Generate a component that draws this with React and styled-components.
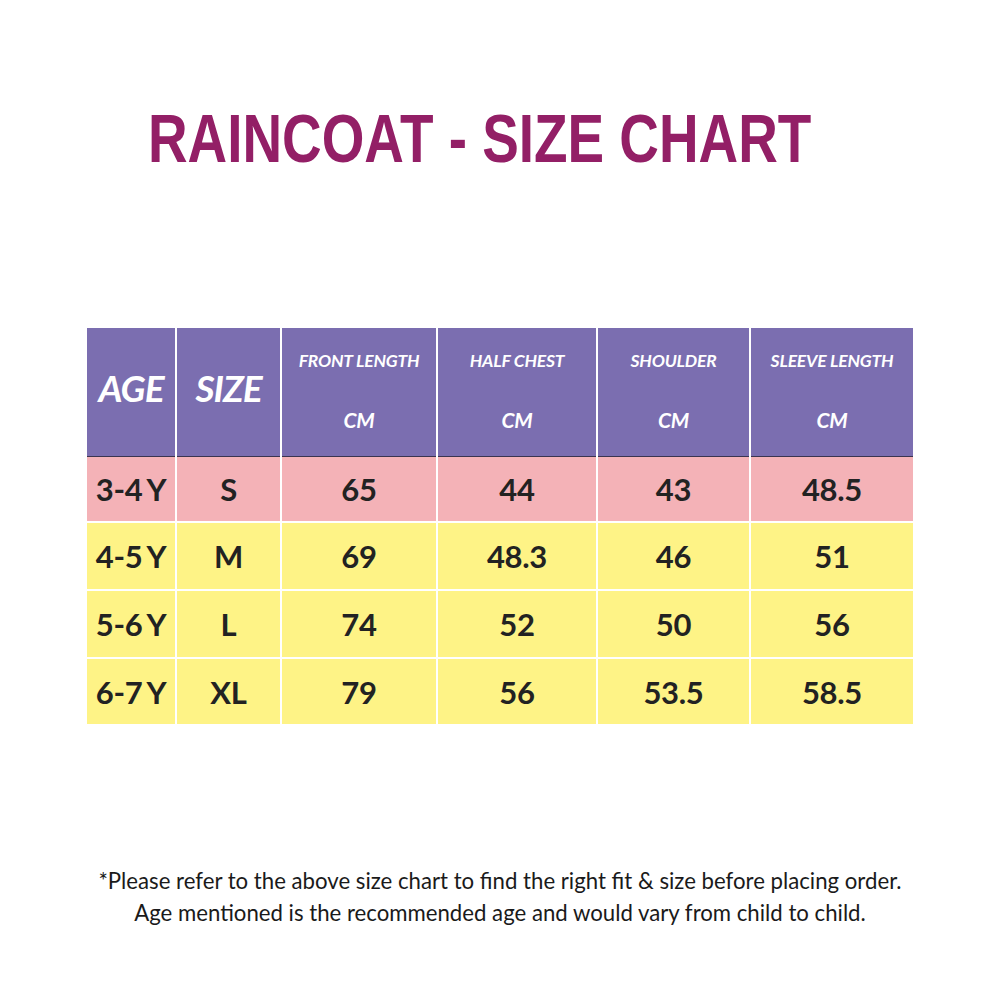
import React from 'react';
import styled, { createGlobalStyle } from 'styled-components';

const Global = createGlobalStyle`
  body {
    margin: 0;
    background: #fff;
  }
`;

const Page = styled.div`
  width: 1000px;
  height: 1000px;
  display: flex;
  flex-direction: column;
  align-items: center;
  background: #fff;
`;

const TitleWrap = styled.div`
  height: 328px;
  width: 100%;
  padding-top: 100px;
  box-sizing: border-box;
  padding-left: 148px;
`;

const Title = styled.h1`
  display: inline-block;
  margin: 0;
  font-family: 'Liberation Sans', Arial, sans-serif;
  font-weight: 700;
  font-size: 69px;
  line-height: 78px;
  color: #931f66;
  white-space: nowrap;
  transform: scaleX(0.795);
  transform-origin: left center;
`;

const Table = styled.div`
  display: grid;
  grid-template-columns: 88px 103px 154px 158px 151px 162px;
  grid-template-rows: 127px 64px 66px 66px 65px;
  column-gap: 2px;
  row-gap: 2px;
  font-family: Lato, 'Open Sans', sans-serif;
`;

const HeadCell = styled.div`
  background: #7b6eb0;
  border-bottom: 1px solid #3a3450;
  color: #fff;
  font-style: italic;
  font-weight: 700;
  display: flex;
  flex-direction: column;
  align-items: center;
  justify-content: ${p => (p.big ? 'center' : 'flex-start')};
  font-size: ${p => (p.big ? '37px' : '17.5px')};
  padding-top: ${p => (p.big ? '0' : '22px')};
  padding-bottom: ${p => (p.big ? '10px' : '0')};
  box-sizing: border-box;
  letter-spacing: ${p => (p.big ? '-1px' : '-0.2px')};
  margin-bottom: -2px;
`;

const Unit = styled.span`
  margin-top: 36px;
  font-size: 21px;
`;

const Cell = styled.div`
  background: ${p => (p.pink ? '#f4b2b7' : '#fef386')};
  color: #222;
  font-weight: 700;
  font-size: 31px;
  letter-spacing: -0.3px;
  word-spacing: -2px;
  display: flex;
  align-items: center;
  justify-content: center;
`;

const Note = styled.div`
  margin-top: 141px;
  font-family: Lato, 'Open Sans', sans-serif;
  font-size: 22.2px;
  line-height: 32px;
  color: #1a1a1a;
  text-align: center;
  white-space: nowrap;
`;

const headers = ['FRONT LENGTH', 'HALF CHEST', 'SHOULDER', 'SLEEVE LENGTH'];

const rows = [
  ['3-4 Y', 'S', '65', '44', '43', '48.5'],
  ['4-5 Y', 'M', '69', '48.3', '46', '51'],
  ['5-6 Y', 'L', '74', '52', '50', '56'],
  ['6-7 Y', 'XL', '79', '56', '53.5', '58.5'],
];

export default function App() {
  return (
    <Page>
      <Global />
      <TitleWrap>
        <Title>RAINCOAT - SIZE CHART</Title>
      </TitleWrap>
      <Table>
        <HeadCell big>AGE</HeadCell>
        <HeadCell big>SIZE</HeadCell>
        {headers.map(h => (
          <HeadCell key={h}>
            {h}
            <Unit>CM</Unit>
          </HeadCell>
        ))}
        {rows.map((r, i) =>
          r.map((v, j) => (
            <Cell key={`${i}-${j}`} pink={i === 0}>
              {v}
            </Cell>
          ))
        )}
      </Table>
      <Note>
        *Please refer to the above size chart to find the right fit &amp; size before placing order.
        <br />
        Age mentioned is the recommended age and would vary from child to child.
      </Note>
    </Page>
  );
}
